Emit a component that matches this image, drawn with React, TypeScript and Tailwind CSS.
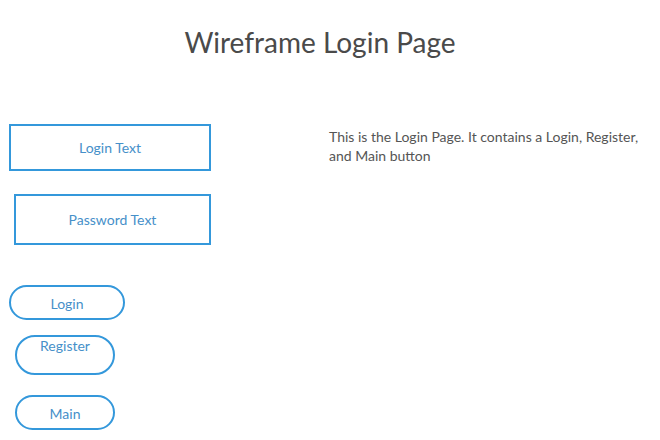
import React from "react";

export default function App() {
  return (
    <div className="w-[660px] h-[440px] bg-white overflow-hidden font-['Lato',sans-serif]">
      <h1 className="w-[640px] pt-[26px] text-center text-[28px] leading-[32px] text-[#4a4a4a]">
        Wireframe Login Page
      </h1>
      <div className="flex mt-[65px]">
        <div className="flex flex-col w-[211px] shrink-0">
          <div className="mt-[1px] ml-[9px] w-[202px] h-[47px] border-2 border-[#3498db] flex items-center justify-center text-[14px] text-[#4690c9]">
            Login Text
          </div>
          <div className="mt-[23px] ml-[14px] w-[197px] h-[51px] border-2 border-[#3498db] flex items-center justify-center text-[14px] text-[#4690c9]">
            Password Text
          </div>
          <div className="mt-[40px] ml-[9px] w-[116px] h-[35px] rounded-full border-2 border-[#3498db] flex items-center justify-center pt-[1px] text-[14px] text-[#4690c9]">
            Login
          </div>
          <div className="mt-[15px] ml-[15px] w-[100px] h-[40px] rounded-full border-2 border-[#3498db] flex items-start justify-center text-[14px] leading-[18px] text-[#4690c9]">
            Register
          </div>
          <div className="mt-[20px] ml-[15px] w-[100px] h-[35px] rounded-full border-2 border-[#3498db] flex items-center justify-center pt-[1px] text-[14px] text-[#4690c9]">
            Main
          </div>
        </div>
        <p className="ml-[118px] mt-[4px] w-[320px] text-[14px] leading-[19px] text-[#555555]">
          This is the Login Page. It contains a Login, Register, and Main button
        </p>
      </div>
    </div>
  );
}
